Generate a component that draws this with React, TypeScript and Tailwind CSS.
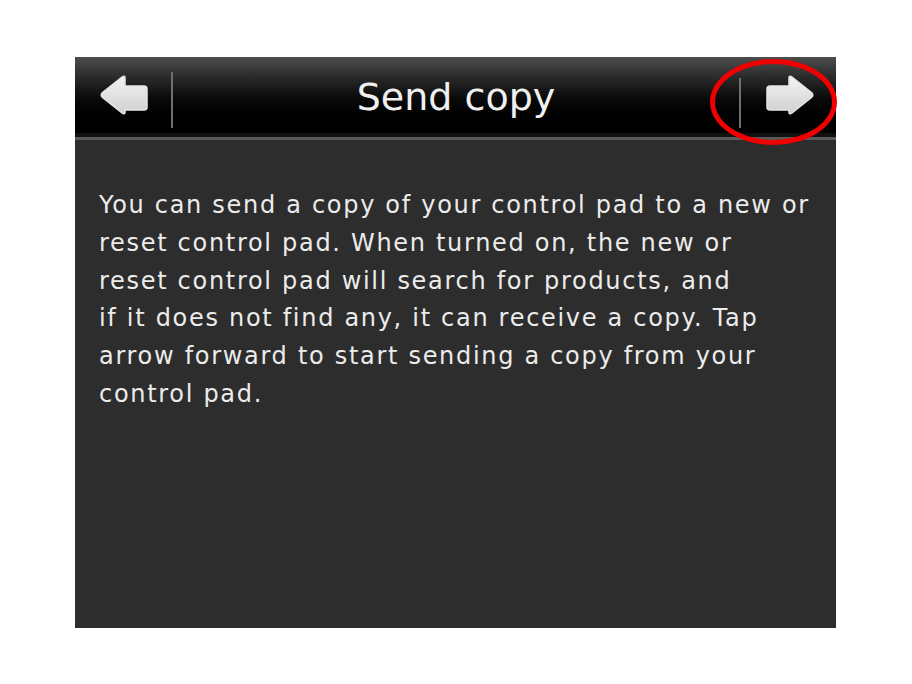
import React from "react";

function Arrow({ dir }: { dir: "left" | "right" }) {
  return (
    <svg width="48" height="40" viewBox="0 0 48 40" className={dir === "left" ? "-scale-x-100" : ""}>
      <defs>
        <linearGradient id={"ag" + dir} x1="0" y1="0" x2="0" y2="1">
          <stop offset="0" stopColor="#f4f4f4" />
          <stop offset="1" stopColor="#cfcfcf" />
        </linearGradient>
      </defs>
      <path
        d="M4 11 Q1 11 1 14 L1 32 Q1 35 4 35 L23 35 L23 37 Q23 40 26 38 L45.5 22.5 Q48 20 45.5 17.5 L26 2 Q23 0 23 3 L23 11 Z"
        fill={"url(#ag" + dir + ")"}
        stroke="#e6e6e6"
        strokeWidth="1.5"
        strokeLinejoin="round"
      />
    </svg>
  );
}

export default function App() {
  return (
    <div className="w-[912px] h-[684px] bg-white pt-[57px] pl-[75px] relative" style={{ fontFamily: '"DejaVu Sans", Verdana, sans-serif' }}>
      <div className="w-[761px] h-[571px] bg-[#2d2d2d] flex flex-col">
        <div className="h-[76px] flex items-center bg-gradient-to-b from-[#4d4d4d] via-[#0a0a0a] via-55% to-black">
          <div className="w-[96px] flex justify-center pl-[2px]">
            <Arrow dir="left" />
          </div>
          <div className="w-[2px] h-[56px] bg-[#6f6f6f] mt-[10px]" />
          <div className="flex-1 text-center text-[38px] text-[#f0f0f0] leading-none pt-[4px]">Send copy</div>
          <div className="w-[2px] h-[50px] bg-[#6f6f6f] mt-[16px]" />
          <div className="w-[95px] flex justify-center pl-[2px]">
            <Arrow dir="right" />
          </div>
        </div>
        <div className="h-[4px] bg-[#111]" />
        <div className="h-[3px] bg-[#5a5a5a]" />
        <div className="pl-[24px] pt-[47px] text-[24px] leading-[37.8px] text-[#ececec] tracking-[1.7px]">
          You can send a copy of your control pad to a new or
          <br />
          reset control pad. When turned on, the new or
          <br />
          reset control pad will search for products, and
          <br />
          if it does not find any, it can receive a copy. Tap
          <br />
          arrow forward to start sending a copy from your
          <br />
          control pad.
        </div>
      </div>
      <div className="absolute left-[710px] top-[59px] w-[127px] h-[86px] rounded-[50%] border-[5px] border-[#f00000]" />
    </div>
  );
}
